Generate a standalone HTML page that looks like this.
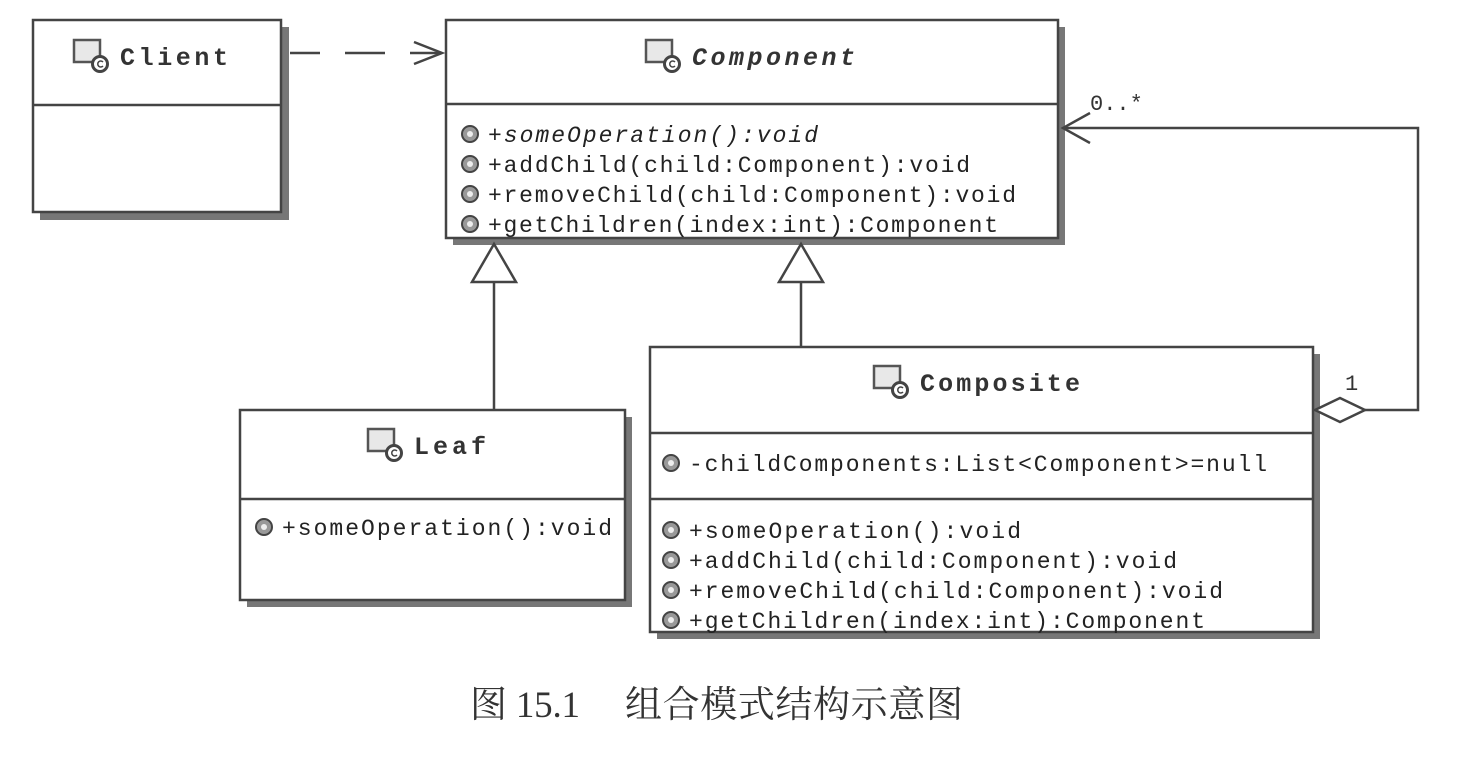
<!DOCTYPE html>
<html><head><meta charset="utf-8"><style>
html,body{margin:0;padding:0;background:#fff;}
svg{display:block}
.m{font-family:"Liberation Mono",monospace;font-size:23px;fill:#222}
.h{font-family:"Liberation Mono",monospace;font-size:25px;font-weight:bold;fill:#333}
</style></head><body>
<svg width="1458" height="760" viewBox="0 0 1458 760" xmlns="http://www.w3.org/2000/svg">
<defs>
<g id="ci"><rect x="0" y="0" width="26" height="22" fill="#e8e8e8" stroke="#555" stroke-width="2.5"/><circle cx="26" cy="24" r="7.5" fill="#fff" stroke="#444" stroke-width="3"/><path d="M29 22 A3 3 0 1 0 29 26" fill="none" stroke="#444" stroke-width="1.5"/></g>
<g id="op"><circle cx="0" cy="0" r="8" fill="#999" stroke="#444" stroke-width="2"/><circle cx="0" cy="0" r="3" fill="#eee"/></g>
</defs>
<g fill="#fff" stroke="#444" stroke-width="2.5">
<rect x="40" y="27" width="249" height="193" fill="#777" stroke="none"/>
<rect x="453" y="27" width="612" height="218" fill="#777" stroke="none"/>
<rect x="247" y="417" width="385" height="190" fill="#777" stroke="none"/>
<rect x="657" y="354" width="663" height="285" fill="#777" stroke="none"/>
<rect x="33" y="20" width="248" height="192"/>
<line x1="33" y1="105" x2="281" y2="105"/>
<rect x="446" y="20" width="612" height="218"/>
<line x1="446" y1="104" x2="1058" y2="104"/>
<rect x="240" y="410" width="385" height="190"/>
<line x1="240" y1="499" x2="625" y2="499"/>
<rect x="650" y="347" width="663" height="285"/>
<line x1="650" y1="433" x2="1313" y2="433"/>
<line x1="650" y1="499" x2="1313" y2="499"/>
</g>
<g fill="none" stroke="#444" stroke-width="2.5">
<line x1="290" y1="53" x2="320" y2="53"/><line x1="345" y1="53" x2="385" y2="53"/><line x1="410" y1="53" x2="442" y2="53"/>
<polyline points="414,42 442,53 414,64"/>
<line x1="494" y1="410" x2="494" y2="282"/>
<polygon points="494,244 472,282 516,282" fill="#fff"/>
<line x1="801" y1="347" x2="801" y2="282"/>
<polygon points="801,244 779,282 823,282" fill="#fff"/>
<polygon points="1315,410 1340,398 1365,410 1340,422" fill="#fff"/>
<polyline points="1365,410 1418,410 1418,128 1063,128"/>
<polyline points="1090,113 1063,128 1090,143"/>
</g>
<g fill="#333" font-family="Liberation Mono,monospace" font-size="22">
<text x="1090" y="110">0..*</text><text x="1345" y="390">1</text>
</g>
<use href="#ci" x="74" y="40"/><text class="h" x="120" y="65" textLength="108">Client</text>
<use href="#ci" x="646" y="40"/><text class="h" x="692" y="65" font-style="italic" textLength="163">Component</text>
<use href="#ci" x="368" y="429"/><text class="h" x="414" y="454" textLength="72">Leaf</text>
<use href="#ci" x="874" y="366"/><text class="h" x="920" y="391" textLength="160">Composite</text>
<g>
<use href="#op" x="470" y="134"/><text class="m" x="488" y="142" font-style="italic" textLength="330">+someOperation():void</text>
<use href="#op" x="470" y="164"/><text class="m" x="488" y="172" textLength="482">+addChild(child:Component):void</text>
<use href="#op" x="470" y="194"/><text class="m" x="488" y="202" textLength="528">+removeChild(child:Component):void</text>
<use href="#op" x="470" y="224"/><text class="m" x="488" y="232" textLength="510">+getChildren(index:int):Component</text>
<use href="#op" x="264" y="527"/><text class="m" x="282" y="535" textLength="330">+someOperation():void</text>
<use href="#op" x="671" y="463"/><text class="m" x="689" y="471" textLength="578">-childComponents:List&lt;Component&gt;=null</text>
<use href="#op" x="671" y="530"/><text class="m" x="689" y="538" textLength="332">+someOperation():void</text>
<use href="#op" x="671" y="560"/><text class="m" x="689" y="568" textLength="488">+addChild(child:Component):void</text>
<use href="#op" x="671" y="590"/><text class="m" x="689" y="598" textLength="534">+removeChild(child:Component):void</text>
<use href="#op" x="671" y="620"/><text class="m" x="689" y="628" textLength="516">+getChildren(index:int):Component</text>
</g>
<g font-family="Liberation Serif,Noto Serif CJK SC,serif" font-size="37" fill="#333">
<text x="470" y="717" textLength="110">图 15.1</text>
<text x="625" y="717" textLength="338">组合模式结构示意图</text>
</g>
</svg>
</body></html>
